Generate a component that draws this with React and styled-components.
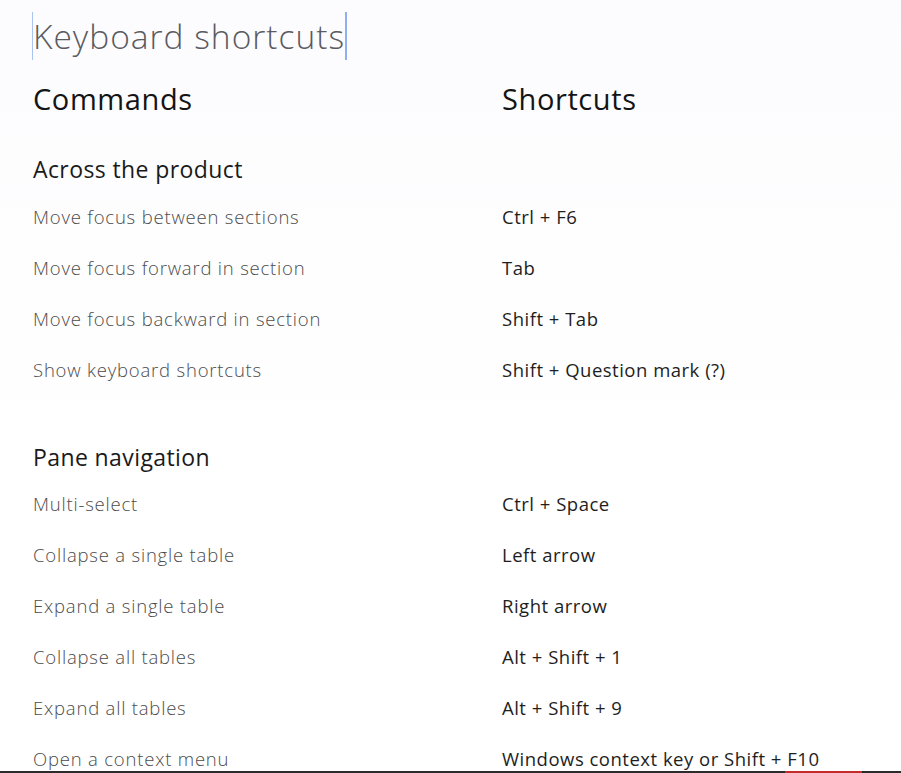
import React from "react";
import styled, { createGlobalStyle } from "styled-components";

const Global = createGlobalStyle`
  html, body { margin: 0; padding: 0; background: #ffffff; }
  body { font-family: "Open Sans", "Noto Sans", Arial, sans-serif; }
`;

const Page = styled.div`
  width: 901px;
  height: 773px;
  overflow: hidden;
  position: relative;
  background: linear-gradient(#fcfcfe, #ffffff 60%);
  padding-left: 33px;
  box-sizing: border-box;
`;

const Title = styled.h1`
  margin: 12px 0 0 -1px;
  display: inline-block;
  font-size: 33.5px;
  line-height: 48px;
  font-weight: 300;
  color: #5a5a5f;
  letter-spacing: 1px;
  border-left: 1px solid #a9c4ef;
  border-right: 2px solid #8fb0f0;
  padding: 0;
`;

const Grid = styled.div`
  display: grid;
  grid-template-columns: 469px 1fr;
`;

const ColHead = styled.div`
  font-size: 29px;
  line-height: 40px;
  font-weight: 400;
  color: #141414;
  letter-spacing: 0.6px;
  margin-top: 19px;
`;

const Section = styled.div`
  grid-column: 1 / -1;
  font-size: 23px;
  line-height: 40px;
  font-weight: 400;
  color: #1a1a1a;
  letter-spacing: 0.4px;
  margin-top: ${(p) => p.$top}px;
  padding-bottom: 1.5px;
`;

const Cell = styled.div`
  height: 51px;
  display: flex;
  align-items: center;
  font-size: 18.5px;
  letter-spacing: ${(p) => (p.$key ? "0.5px" : "0.8px")};
  font-weight: ${(p) => (p.$key ? 400 : 300)};
  color: ${(p) => (p.$key ? "#1e1e1e" : "#4c4c4c")};
  white-space: nowrap;
`;

const BottomBar = styled.div`
  position: absolute;
  left: 0;
  right: 0;
  bottom: 0;
  height: 2px;
  background: #2b2b2b;
`;

const RedMark = styled.div`
  position: absolute;
  bottom: 0;
  left: 785px;
  width: 77px;
  height: 2px;
  background: #c42b2b;
`;

const sections = [
  {
    name: "Across the product",
    top: 30,
    rows: [
      ["Move focus between sections", "Ctrl + F6"],
      ["Move focus forward in section", "Tab"],
      ["Move focus backward in section", "Shift + Tab"],
      ["Show keyboard shortcuts", "Shift + Question mark (?)"],
    ],
  },
  {
    name: "Pane navigation",
    top: 42,
    rows: [
      ["Multi-select", "Ctrl + Space"],
      ["Collapse a single table", "Left arrow"],
      ["Expand a single table", "Right arrow"],
      ["Collapse all tables", "Alt + Shift + 1"],
      ["Expand all tables", "Alt + Shift + 9"],
      ["Open a context menu", "Windows context key or Shift + F10"],
    ],
  },
];

export default function App() {
  return (
    <Page>
      <Global />
      <Title>Keyboard shortcuts</Title>
      <Grid>
        <ColHead>Commands</ColHead>
        <ColHead>Shortcuts</ColHead>
        {sections.map((s) => (
          <React.Fragment key={s.name}>
            <Section $top={s.top}>{s.name}</Section>
            {s.rows.map(([c, k]) => (
              <React.Fragment key={c}>
                <Cell>{c}</Cell>
                <Cell $key>{k}</Cell>
              </React.Fragment>
            ))}
          </React.Fragment>
        ))}
      </Grid>
      <BottomBar />
      <RedMark />
    </Page>
  );
}
